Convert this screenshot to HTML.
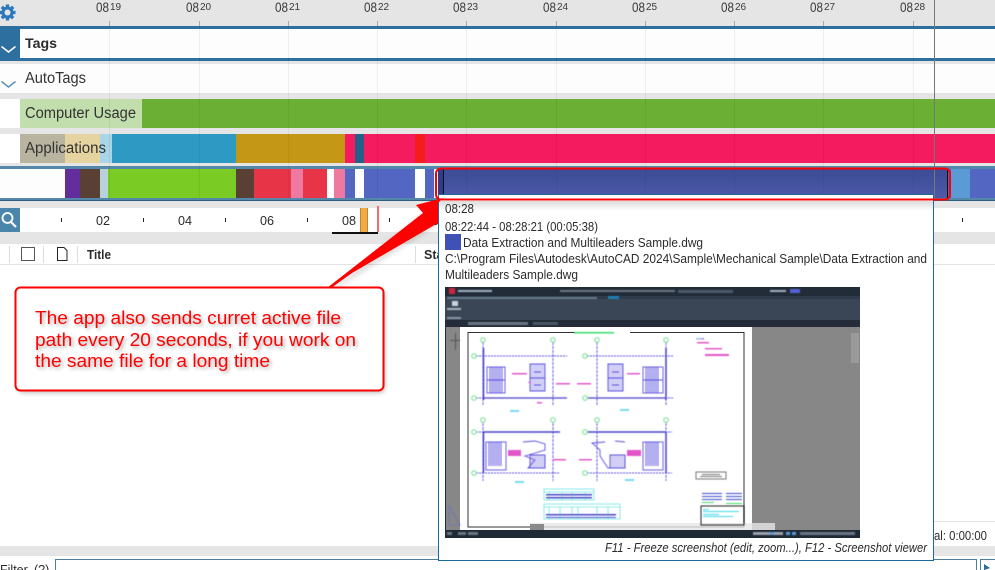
<!DOCTYPE html>
<html><head><meta charset="utf-8"><style>
html,body{margin:0;padding:0;width:995px;height:570px;overflow:hidden;background:#fff}
svg{display:block}
text{font-family:"Liberation Sans",sans-serif;fill:#2b2b2b}
.t{font-size:12.5px}
.h{font-size:13.5px;fill:#3a3a3a}
.s{font-size:10px;fill:#3a3a3a}
.l{font-size:15.5px;fill:#333}
.c{font-size:18px;fill:#f00}
</style></head><body>
<svg width="995" height="570" viewBox="0 0 995 570" xmlns="http://www.w3.org/2000/svg" shape-rendering="crispEdges">
<defs>
<linearGradient id="sel" x1="0" y1="0" x2="0" y2="1"><stop offset="0" stop-color="#3c4b93"/><stop offset="1" stop-color="#4c5aaa"/></linearGradient>
<linearGradient id="sh" x1="0" y1="0" x2="0" y2="1"><stop offset="0" stop-color="#000" stop-opacity=".14"/><stop offset="1" stop-color="#000" stop-opacity="0"/></linearGradient>
<filter id="b1" x="-10%" y="-10%" width="120%" height="120%"><feGaussianBlur stdDeviation="2.5"/></filter>
<filter id="b2" x="-5%" y="-5%" width="110%" height="110%"><feGaussianBlur stdDeviation=".55"/></filter>
<filter id="ts" x="-5%" y="-20%" width="110%" height="150%"><feDropShadow dx="2" dy="2" stdDeviation="1.8" flood-color="#000" flood-opacity=".32"/></filter>
</defs>

<rect width="995" height="570" fill="#fff"/>
<rect width="995" height="26" fill="#e5e5e5"/>
<rect y="26" width="995" height="3" fill="#2d6f9f"/>
<rect y="29" x="20" width="975" height="29" fill="#fdfdfd"/>
<rect y="58" width="995" height="3" fill="#2d6f9f"/>
<rect y="26" width="20" height="35" fill="#2d6f9f"/>
<rect y="61" width="995" height="3" fill="#e5e5e5"/>
<rect y="64" width="995" height="29" fill="#fdfdfd"/>
<rect y="93" width="995" height="6" fill="#e5e5e5"/>
<rect x="20" y="99" width="122" height="29" fill="#c2dead"/>
<rect x="142" y="99" width="853" height="29" fill="#6bb034"/>
<rect y="128" width="995" height="6" fill="#e5e5e5"/>
<g>
<rect x="20" y="134" width="45" height="29" fill="#b9b4a0"/>
<rect x="65" y="134" width="35" height="29" fill="#e5d3a0"/>
<rect x="100" y="134" width="12" height="29" fill="#a8d6e8"/>
<rect x="112" y="134" width="124" height="29" fill="#2e9ac3"/>
<rect x="236" y="134" width="109" height="29" fill="#c49716"/>
<rect x="345" y="134" width="10" height="29" fill="#f41b5f"/>
<rect x="355" y="134" width="9" height="29" fill="#235f86"/>
<rect x="364" y="134" width="51" height="29" fill="#f41b5f"/>
<rect x="415" y="134" width="10" height="29" fill="#f41c1c"/>
<rect x="425" y="134" width="570" height="29" fill="#f41b5f"/>
</g>
<rect y="163" width="995" height="3" fill="#e5e5e5"/>
<rect y="166" width="995" height="3" fill="#5488ab"/>
<rect y="169" width="995" height="29" fill="#fdfdfd"/>
<g>
<rect x="65" y="169" width="15" height="29" fill="#632d9c"/>
<rect x="80" y="169" width="20" height="29" fill="#5a4034"/>
<rect x="100" y="169" width="8" height="29" fill="#b7d2d9"/>
<rect x="108" y="169" width="128" height="29" fill="#7acb23"/>
<rect x="236" y="169" width="18" height="29" fill="#5a4034"/>
<rect x="254" y="169" width="37" height="29" fill="#e73446"/>
<rect x="291" y="169" width="12" height="29" fill="#ee789f"/>
<rect x="303" y="169" width="24" height="29" fill="#e73446"/>
<rect x="334" y="169" width="11" height="29" fill="#ee789f"/>
<rect x="345" y="169" width="10" height="29" fill="#5266c2"/>
<rect x="364" y="169" width="51" height="29" fill="#5266c2"/>
<rect x="425" y="169" width="9" height="29" fill="#5266c2"/>
<rect x="438" y="169" width="6" height="29" fill="#2c3d8c"/>
<rect x="443" y="169" width="505" height="29" fill="url(#sel)"/>
<rect x="443" y="169" width="1" height="29" fill="#111"/>
<rect x="947" y="169" width="1" height="29" fill="#111"/>
<rect x="948" y="169" width="3" height="29" fill="#5266c2"/>
<rect x="951" y="169" width="19" height="29" fill="#5a9bd6"/>
<rect x="970" y="169" width="25" height="29" fill="#5266c2"/>
</g>
<rect y="198" width="995" height="2" fill="#5488ab"/>
<rect y="200" width="995" height="1" fill="#2f5f80"/>
<rect y="201" width="995" height="7" fill="#e5e5e5"/>

<g fill="#000" fill-opacity=".055">
<rect x="109" y="26" width="1" height="172"/><rect x="199" y="26" width="1" height="172"/><rect x="288" y="26" width="1" height="172"/><rect x="377" y="26" width="1" height="172"/><rect x="466" y="26" width="1" height="172"/><rect x="556" y="26" width="1" height="172"/><rect x="645" y="26" width="1" height="172"/><rect x="734" y="26" width="1" height="172"/><rect x="823" y="26" width="1" height="172"/><rect x="913" y="26" width="1" height="172"/>
</g>
<g fill="#a8a8a8">
<rect x="109" y="21" width="1" height="5"/><rect x="199" y="21" width="1" height="5"/><rect x="288" y="21" width="1" height="5"/><rect x="377" y="21" width="1" height="5"/><rect x="466" y="21" width="1" height="5"/><rect x="556" y="21" width="1" height="5"/><rect x="645" y="21" width="1" height="5"/><rect x="734" y="21" width="1" height="5"/><rect x="823" y="21" width="1" height="5"/><rect x="913" y="21" width="1" height="5"/>
</g>
<rect x="934" y="0" width="1" height="200" fill="#777"/>

<g shape-rendering="auto">
<g transform="translate(7.5 12.5)" fill="#2b79bd">
<circle r="6"/>
<rect x="-1.7" y="-8" width="3.4" height="16"/><rect x="-1.7" y="-8" width="3.4" height="16" transform="rotate(45)"/><rect x="-1.7" y="-8" width="3.4" height="16" transform="rotate(90)"/><rect x="-1.7" y="-8" width="3.4" height="16" transform="rotate(135)"/>
<circle r="3" fill="#e5e5e5"/>
</g>
<path d="M1.500 46.500 L8.500 52 L15.500 46.500" fill="none" stroke="#fff" stroke-width="1.5"/>
<path d="M1.500 81.500 L8.500 87 L15.500 81.500" fill="none" stroke="#5a93ba" stroke-width="1.5"/>
<g>
<text class="h" x="96" y="12" textLength="13" lengthAdjust="spacingAndGlyphs">08</text><text class="s" x="110" y="10">19</text>
<text class="h" x="186" y="12" textLength="13" lengthAdjust="spacingAndGlyphs">08</text><text class="s" x="200" y="10">20</text>
<text class="h" x="275" y="12" textLength="13" lengthAdjust="spacingAndGlyphs">08</text><text class="s" x="289" y="10">21</text>
<text class="h" x="364" y="12" textLength="13" lengthAdjust="spacingAndGlyphs">08</text><text class="s" x="378" y="10">22</text>
<text class="h" x="453" y="12" textLength="13" lengthAdjust="spacingAndGlyphs">08</text><text class="s" x="467" y="10">23</text>
<text class="h" x="543" y="12" textLength="13" lengthAdjust="spacingAndGlyphs">08</text><text class="s" x="557" y="10">24</text>
<text class="h" x="632" y="12" textLength="13" lengthAdjust="spacingAndGlyphs">08</text><text class="s" x="646" y="10">25</text>
<text class="h" x="721" y="12" textLength="13" lengthAdjust="spacingAndGlyphs">08</text><text class="s" x="735" y="10">26</text>
<text class="h" x="810" y="12" textLength="13" lengthAdjust="spacingAndGlyphs">08</text><text class="s" x="824" y="10">27</text>
<text class="h" x="900" y="12" textLength="13" lengthAdjust="spacingAndGlyphs">08</text><text class="s" x="914" y="10">28</text>
</g>
<text x="25" y="48" font-size="14" font-weight="700" fill="#222" textLength="32" lengthAdjust="spacingAndGlyphs">Tags</text>
<text class="l" x="25" y="83" textLength="61" lengthAdjust="spacingAndGlyphs">AutoTags</text>
<text class="l" x="25" y="118" textLength="111" lengthAdjust="spacingAndGlyphs">Computer Usage</text>
<text class="l" x="25" y="153" textLength="81" lengthAdjust="spacingAndGlyphs">Applications</text>
</g>

<rect y="208" width="995" height="24" fill="#fff"/>
<rect x="0" y="208" width="20" height="24" fill="#4a86ab"/>
<g shape-rendering="auto">
<circle cx="7.500" cy="218" r="5" fill="none" stroke="#fff" stroke-width="1.8"/>
<path d="M11 222 L16 227" stroke="#fff" stroke-width="2.2" fill="none"/>
<text x="96" y="225" font-size="13" fill="#2b2b2b" textLength="14" lengthAdjust="spacingAndGlyphs">02</text>
<text x="178" y="225" font-size="13" fill="#2b2b2b" textLength="14" lengthAdjust="spacingAndGlyphs">04</text>
<text x="260" y="225" font-size="13" fill="#2b2b2b" textLength="14" lengthAdjust="spacingAndGlyphs">06</text>
<text x="342" y="225" font-size="13" fill="#2b2b2b" textLength="14" lengthAdjust="spacingAndGlyphs">08</text>
<text x="425" y="225" font-size="13" fill="#2b2b2b" textLength="14" lengthAdjust="spacingAndGlyphs">10</text>
</g>
<g fill="#222"><rect x="61" y="218" width="1" height="4"/><rect x="143" y="218" width="1" height="4"/><rect x="225" y="218" width="1" height="4"/><rect x="307" y="218" width="1" height="4"/><rect x="389" y="218" width="1" height="4"/><rect x="962" y="218" width="1" height="4"/></g>
<rect x="360" y="208" width="8" height="24" fill="#f7a941"/>
<rect x="360" y="208" width="1" height="24" fill="#b08a48"/>
<rect x="367" y="208" width="1" height="24" fill="#b08a48"/>
<rect x="377" y="206" width="2" height="27" fill="#f46a6a"/>
<rect x="332" y="232" width="46" height="2" fill="#111"/>
<rect y="232" x="0" width="332" height="12" fill="#e5e5e5"/>
<rect y="234" x="332" width="663" height="10" fill="#e5e5e5"/>
<rect y="232" x="378" width="617" height="2" fill="#e5e5e5"/>

<rect y="244" width="995" height="20" fill="#fff"/>
<rect y="264" width="995" height="1" fill="#e3e3e3"/>
<g fill="#ddd"><rect x="9" y="246" width="1" height="17"/><rect x="43" y="246" width="1" height="17"/><rect x="77" y="246" width="1" height="17"/><rect x="415" y="246" width="1" height="17"/></g>
<rect x="21.500" y="247.500" width="13" height="13" fill="#fff" stroke="#555"/>
<g shape-rendering="auto">
<path d="M57.500 247.500 H64 L67 250.500 V260.500 H57.500 Z" fill="#fff" stroke="#222"/>
<text x="87" y="259" font-size="12.500" font-weight="700" fill="#333" textLength="24" lengthAdjust="spacingAndGlyphs">Title</text>
<text x="424" y="259" font-size="12.500" font-weight="700" fill="#333">Sta</text>
</g>

<rect x="934" y="521" width="61" height="1" fill="#e3e3e3"/>
<text x="934" y="540" font-size="12.500" fill="#333" shape-rendering="auto" textLength="53" lengthAdjust="spacingAndGlyphs">al: 0:00:00</text>
<rect y="546" width="995" height="10" fill="#e5e5e5"/>
<text x="0" y="574" font-size="12.500" fill="#222">Filter</text>
<text x="34" y="574" font-size="12.500" fill="#2d6f9f">(?)</text>
<rect x="55.500" y="559.500" width="921" height="20" fill="#fff" stroke="#4a7f9f"/>
<rect x="980.500" y="559.500" width="20" height="20" fill="#fff" stroke="#4a7f9f"/>
<path d="M984 564 L990 568 L984 570 Z" fill="#2d6f9f"/>

<rect x="438.500" y="194.500" width="495" height="366" fill="#fff" stroke="#1c6a9c"/>
<rect x="439" y="201" width="494" height="10" fill="url(#sh)"/>
<g shape-rendering="auto">
<text class="t" x="445" y="213" textLength="29" lengthAdjust="spacingAndGlyphs">08:28</text>
<text class="t" x="445" y="231" textLength="153" lengthAdjust="spacingAndGlyphs">08:22:44 - 08:28:21 (00:05:38)</text>
<rect x="445" y="234" width="16" height="16" fill="#3f51b5"/>
<text class="t" x="463" y="247" textLength="240" lengthAdjust="spacingAndGlyphs">Data Extraction and Multileaders Sample.dwg</text>
<text class="t" x="445" y="263" textLength="482" lengthAdjust="spacingAndGlyphs">C:\Program Files\Autodesk\AutoCAD 2024\Sample\Mechanical Sample\Data Extraction and</text>
<text class="t" x="445" y="279" textLength="133" lengthAdjust="spacingAndGlyphs">Multileaders Sample.dwg</text>
<text class="t" x="605" y="552" font-style="italic" textLength="322" lengthAdjust="spacingAndGlyphs">F11 - Freeze screenshot (edit, zoom...), F12 - Screenshot viewer</text>
</g>

<g>
<rect x="445" y="287" width="415" height="251" fill="#222c38"/>
<rect x="445" y="296" width="415" height="4" fill="#2f3b4a"/>
<rect x="445" y="299" width="415" height="21" fill="#3a4656"/>
<rect x="445" y="320" width="415" height="7" fill="#232c38"/>
<rect x="446" y="327" width="414" height="203" fill="#878787"/>
<rect x="460" y="327" width="292" height="203" fill="#fff"/>
<rect x="468" y="332.500" width="276" height="194.500" fill="#fff" stroke="#333" stroke-width="1"/>
<rect x="575" y="331" width="55" height="3" fill="#fff"/>
<rect x="445" y="530" width="415" height="8" fill="#202a36"/>
<rect x="530" y="523" width="245" height="7" fill="#e6e6e6" opacity=".8"/>
<rect x="530" y="524" width="14" height="6" fill="#8a8a8a"/>
<rect x="851" y="333" width="8" height="30" fill="#9a9a9a"/>
<g filter="url(#b2)" shape-rendering="auto">
<rect x="449" y="288" width="6" height="6" fill="#c8283c"/>
<rect x="458" y="290" width="34" height="2" fill="#9fb0c0"/>
<rect x="560" y="290" width="115" height="2" fill="#6a7684"/>
<rect x="678" y="290" width="55" height="3" fill="#4c5a6a"/>
<rect x="790" y="289" width="10" height="4" fill="#5563d8"/>
<rect x="770" y="290" width="16" height="2" fill="#9fb0c0"/>
<rect x="447" y="297" width="150" height="2" fill="#6a7a8c"/>
<rect x="608" y="296" width="11" height="3" fill="#1c7fb0"/>
<rect x="447" y="308" width="14" height="2" fill="#aab4c0"/>
<rect x="447" y="317" width="14" height="2" fill="#8a96a2"/>
<rect x="452" y="301" width="6" height="5" fill="#c9d3dd"/>
<rect x="468" y="322" width="60" height="3" fill="#6a7684"/>
<rect x="533" y="322" width="25" height="3" fill="#4c5866"/>
<path d="M450 340.500 H460 M455.500 333 V350" stroke="#555" stroke-width="1"/>
<g fill="#6a5fe0" fill-opacity=".3"><rect x="530" y="364" width="15" height="27"/><rect x="608" y="364" width="15" height="27"/><rect x="530" y="455" width="15" height="13"/><rect x="610" y="455" width="15" height="13"/></g>
<g stroke="#5a4fe0" stroke-width=".9" fill="none">
<path d="M476 356 H567 M587 356 H674 M476 398 H567 M587 398 H674" stroke-dasharray="2 1"/>
<path d="M483 342 V405 M553 342 V405 M597 342 V405 M666 342 V405" stroke-dasharray="3 1"/>
<path d="M476 432 H560 M587 432 H672 M476 473 H560 M587 473 H672" stroke-dasharray="2 1"/>
<path d="M483 423 V481 M553 423 V481 M597 423 V481 M666 423 V481" stroke-dasharray="3 1"/>
<path d="M483.500 348 V400" stroke="#3a34c8" stroke-width="1.4"/><path d="M666 348 V400" stroke="#3a34c8" stroke-width="1.4"/>
<path d="M483.500 432 V473" stroke="#3a34c8" stroke-width="1.4"/><path d="M666 432 V473" stroke="#3a34c8" stroke-width="1.4"/>
<path d="M483 398 H567" stroke="#4a42c8" stroke-width="1.2"/><path d="M587 398 H666" stroke="#4a42c8" stroke-width="1.2"/>
<path d="M483 432 H560" stroke="#4a42c8" stroke-width="1.4"/><path d="M587 432 H666" stroke="#4a42c8" stroke-width="1.4"/>
<rect x="487" y="367" width="18" height="26"/><path d="M490 367V393M492 367V393M494 367V393M496 367V393M498 367V393M500 367V393M502 367V393M487 380H505"/>
<rect x="643" y="367" width="20" height="26"/><path d="M646 367V393M648 367V393M650 367V393M652 367V393M654 367V393M656 367V393M658 367V393M643 380H663"/>
<path d="M530 364 H545 V391 H530 Z M530 378 H545 M534 372 H541 M534 385 H541"/>
<path d="M608 364 H623 V391 H608 Z M608 378 H623 M612 372 H619 M612 385 H619"/>
<rect x="486" y="442" width="20" height="28"/><path d="M489 442V466M491 442V466M493 442V466M495 442V466M497 442V466M499 442V466M501 442V466"/>
<rect x="643" y="442" width="20" height="28"/><path d="M646 442V466M648 442V466M650 442V466M652 442V466M654 442V466M656 442V466M658 442V466"/>
<path d="M523 442 L535 441 L545 444 L545 450 L525 456 L535 460 L528 468 H545 V456 M605 442 L592 443 L600 450 L600 456 L608 468 H625 V456 M625 442 L615 441"/>
<path d="M530 455 H545 V468 H530 Z M610 455 H625 V468 H610 Z"/>
</g>
<g fill="#e254c8"><rect x="512" y="373" width="15" height="1.500"/><rect x="528" y="382" width="3" height="1"/><rect x="556" y="383" width="14" height="1.500"/><rect x="577" y="383" width="14" height="1.500"/><rect x="627" y="373" width="13" height="1.500"/><rect x="508" y="450" width="13" height="6"/><rect x="627" y="450" width="14" height="6"/><rect x="553" y="459" width="13" height="1.500"/><rect x="579" y="459" width="13" height="1.500"/><rect x="696" y="338" width="8" height="1.500"/><rect x="705" y="348" width="17" height="1.500"/><rect x="705" y="354" width="24" height="2"/><rect x="697" y="342" width="12" height="1.500"/><rect x="537" y="402" width="5" height="1.500"/></g>
<g fill="#33dd66"><rect x="574" y="332" width="40" height="1.500"/></g>
<g fill="#78d8f0"><rect x="510" y="410" width="9" height="2"/><rect x="620" y="409" width="9" height="2"/><rect x="515" y="481" width="9" height="2"/><rect x="625" y="479" width="9" height="2"/><rect x="696" y="338" width="6" height="1"/></g>
<g fill="none" stroke="#6fe08f" stroke-width="1">
<circle cx="483" cy="340" r="2.300"/><circle cx="553" cy="340" r="2.300"/><circle cx="597" cy="340" r="2.300"/><circle cx="666" cy="340" r="2.300"/>
<circle cx="474" cy="356" r="2.300"/><circle cx="585" cy="356" r="2.300"/><circle cx="474" cy="398" r="2.300"/><circle cx="585" cy="398" r="2.300"/>
<circle cx="483" cy="420" r="2.300"/><circle cx="553" cy="420" r="2.300"/><circle cx="597" cy="420" r="2.300"/><circle cx="666" cy="420" r="2.300"/>
<circle cx="474" cy="432" r="2.300"/><circle cx="585" cy="432" r="2.300"/><circle cx="474" cy="473" r="2.300"/><circle cx="585" cy="473" r="2.300"/>
</g>
<g fill="none" stroke="#6fe4e4" stroke-width=".8">
<rect x="544" y="489" width="50" height="11"/><path d="M544 492H594M549 492V500M562 492V500M572 492V500M585 492V500"/>
<rect x="544" y="504" width="76" height="15"/><path d="M544 507H620M549 507V519M560 507V519M572 507V519M578 507V519M597 507V519M608 507V519"/>
</g>
<g fill="#4a42c8"><rect x="546" y="494" width="46" height="1.500"/><rect x="546" y="497" width="46" height="1.500"/><rect x="546" y="514" width="70" height="1.500"/><rect x="546" y="517" width="70" height="1"/></g>
<path d="M449 506 V525 H460 Z" fill="none" stroke="#6a74b8" stroke-width=".8"/>
<rect x="696" y="472" width="30" height="7" fill="none" stroke="#777"/>
<rect x="702" y="474" width="18" height="1" fill="#777"/><rect x="700" y="476" width="22" height="1" fill="#777"/>
<rect x="701" y="506" width="43" height="19" fill="none" stroke="#222"/>
<g fill="#3a4cc8"><rect x="702" y="493" width="20" height="1"/><rect x="726" y="493" width="16" height="1"/><rect x="702" y="496" width="20" height="1"/><rect x="726" y="496" width="16" height="1"/><rect x="702" y="499" width="20" height="1"/><rect x="726" y="499" width="16" height="1"/></g>
<g fill="#44d866"><rect x="702" y="502" width="12" height="1"/><rect x="726" y="503" width="16" height="1"/></g>
<g fill="#40d8e8"><rect x="703" y="509" width="6" height="1"/><rect x="703" y="511" width="36" height="1"/><rect x="703" y="514" width="16" height="1"/><rect x="703" y="516" width="30" height="1"/></g>
<g fill="#9aa2ae"><rect x="753" y="532" width="30" height="3"/></g>
<g fill="#5a9be0"><rect x="770" y="532" width="4" height="3"/><rect x="786" y="532" width="4" height="3"/><rect x="792" y="532" width="4" height="3"/></g>
<g fill="#6a7684"><rect x="800" y="532" width="55" height="3"/><rect x="447" y="532" width="5" height="3"/><rect x="458" y="532" width="8" height="3"/><rect x="468" y="532" width="10" height="3"/></g>
</g>
</g>

<rect x="436" y="168.500" width="514" height="31" rx="5" ry="5" fill="none" stroke="#f00" stroke-width="2" shape-rendering="auto"/>

<g shape-rendering="auto">
<rect x="18" y="290" width="367" height="103" rx="5" fill="#000" opacity=".25" filter="url(#b1)"/>
<path d="M322 298 L438 225 L420 215 Z" fill="#000" opacity=".12" filter="url(#b1)"/>
<path d="M443 198 L416 205 L423 213 L327 288 L331 288 L352 273 L438 223 L438 203 Z" fill="#f00"/>
<rect x="15.500" y="287.500" width="368" height="103" rx="5" fill="#fff" stroke="#f00" stroke-width="2"/>
<g filter="url(#ts)">
<text class="c" x="35" y="324" textLength="306" lengthAdjust="spacingAndGlyphs">The app also sends curret active file</text>
<text class="c" x="35" y="346" textLength="321" lengthAdjust="spacingAndGlyphs">path every 20 seconds, if you work on</text>
<text class="c" x="35" y="367" textLength="235" lengthAdjust="spacingAndGlyphs">the same file for a long time</text>
</g>
</g>
</svg>
</body></html>
